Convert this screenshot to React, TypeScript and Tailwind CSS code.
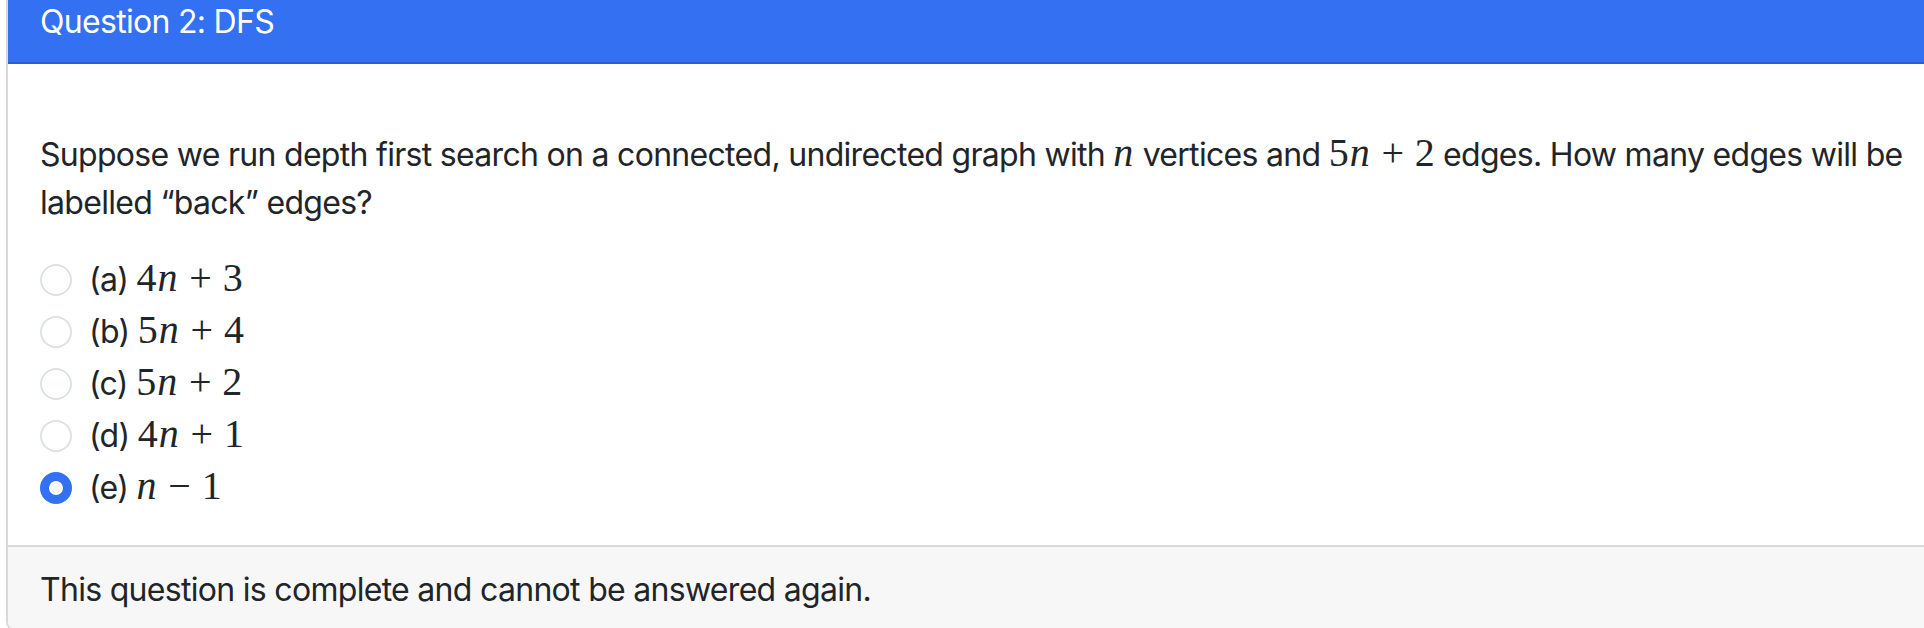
import React from "react";

const M = ({ children }: { children: React.ReactNode }) => (
  <span
    className="text-[40px] leading-[0px] whitespace-nowrap tracking-normal"
    style={{ fontFamily: '"Liberation Serif", "Times New Roman", serif' }}
  >
    {children}
  </span>
);
const I = ({ children }: { children: React.ReactNode }) => <span className="italic mr-[1px]">{children}</span>;
const Op = ({ children }: { children: React.ReactNode }) => <span className="mx-[0.27em]">{children}</span>;

function Expr({ a, op, b }: { a: string; op: string; b: string }) {
  return (
    <M>
      {a && <span className="mr-[1px]">{a}</span>}
      <I>n</I>
      <Op>{op}</Op>
      {b}
    </M>
  );
}

function Radio({ checked }: { checked?: boolean }) {
  if (checked) {
    return (
      <span className="w-[32px] h-[32px] rounded-full bg-[#3370f2] flex items-center justify-center shrink-0">
        <span className="w-[14px] h-[14px] rounded-full bg-white" />
      </span>
    );
  }
  return <span className="w-[32px] h-[32px] rounded-full border-2 border-[#dee2e6] bg-white shrink-0" />;
}

const options: { label: string; a: string; op: string; b: string; checked?: boolean }[] = [
  { label: "(a)", a: "4", op: "+", b: "3" },
  { label: "(b)", a: "5", op: "+", b: "4" },
  { label: "(c)", a: "5", op: "+", b: "2" },
  { label: "(d)", a: "4", op: "+", b: "1" },
  { label: "(e)", a: "", op: "\u2212", b: "1", checked: true },
];

export default function App() {
  return (
    <div
      className="w-full h-[628px] overflow-hidden bg-white text-[#212529] text-[32px] leading-[48px] tracking-[-0.7px]"
      style={{ fontFamily: 'Inter, "Noto Sans", sans-serif' }}
    >
      <div className="ml-[6px] mt-[-20px] w-[1940px] border-2 border-[#d9d9d9] rounded-[12px] overflow-hidden">
        <div className="bg-[#3370f2] text-white px-[32px] py-[16px] border-b-2 border-[#2b5fcd]">Question 2: DFS</div>
        <div className="px-[32px] pt-[67px] pb-[29px]">
          <p className="mb-[29px] pr-[4px]">
            Suppose we run depth first search on a connected, undirected graph with{" "}
            <M>
              <I>n</I>
            </M>{" "}
            vertices and <Expr a="5" op="+" b="2" /> edges. How many edges will be labelled “back” edges?
          </p>
          <div className="flex flex-col">
            {options.map((o) => (
              <div key={o.label} className="flex items-center h-[48px] mb-[4px]">
                <Radio checked={o.checked} />
                <span className="ml-[17px]">
                  {o.label} <Expr a={o.a} op={o.op} b={o.b} />
                </span>
              </div>
            ))}
          </div>
        </div>
        <div className="bg-[#f7f7f7] border-t-2 border-[#d9d9d9] px-[32px] pt-[19px] pb-[17px]">
          This question is complete and cannot be answered again.
        </div>
      </div>
    </div>
  );
}
